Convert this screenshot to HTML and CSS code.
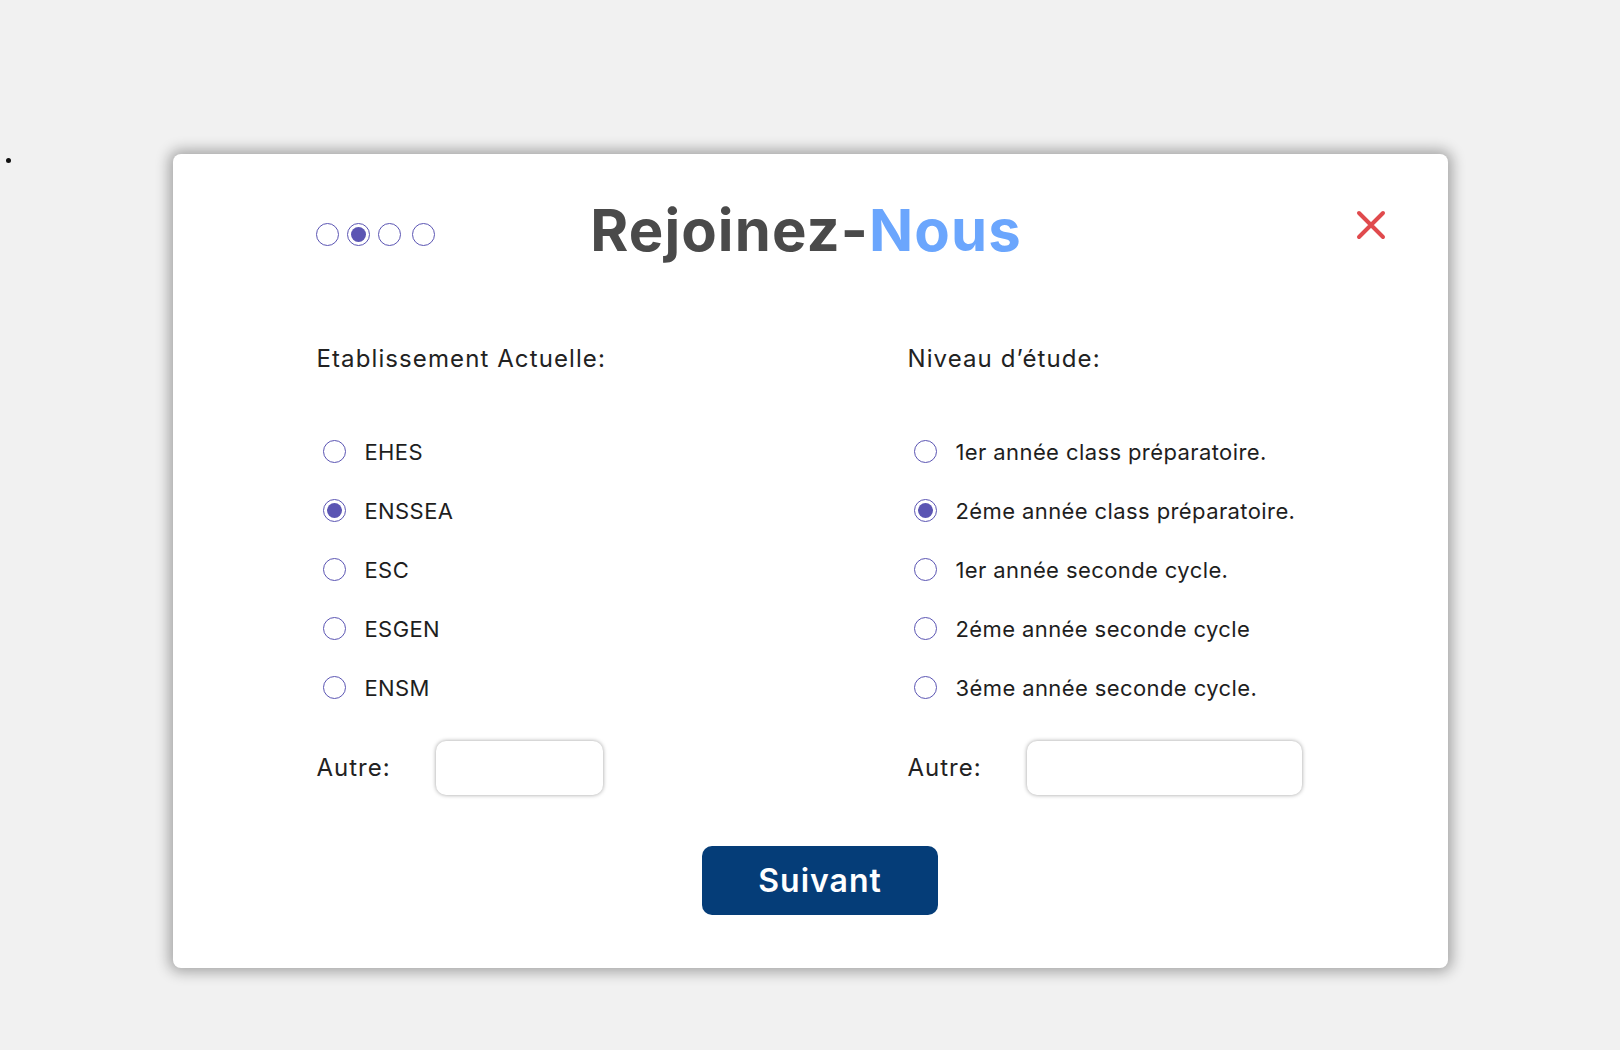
FILE: index.html
```html
<!DOCTYPE html>
<html lang="fr">
<head>
<meta charset="utf-8">
<title>Rejoinez-Nous</title>
<link rel="stylesheet" href="styles.css">
</head>
<body>
<span class="stray"></span>
<div class="modal">
  <button class="close" aria-label="Fermer">
    <svg viewBox="0 0 30 30" width="30" height="30"><path d="M3 3 L27 27 M27 3 L3 27" stroke="#e04a4d" stroke-width="4" stroke-linecap="round"/></svg>
  </button>
  <div class="header">
    <div class="steps">
      <span class="step"></span>
      <span class="step active"></span>
      <span class="step"></span>
      <span class="step last"></span>
    </div>
    <h1 class="title">Rejoinez-<span class="accent">Nous</span></h1>
    <div></div>
  </div>
  <div class="columns">
    <div class="col">
      <div class="label">Etablissement Actuelle:</div>
      <ul class="options">
        <li><span class="radio"></span>EHES</li>
        <li><span class="radio checked"></span>ENSSEA</li>
        <li><span class="radio"></span>ESC</li>
        <li><span class="radio"></span>ESGEN</li>
        <li><span class="radio"></span>ENSM</li>
      </ul>
      <div class="other">
        <span class="other-label">Autre:</span>
        <div class="input small"></div>
      </div>
    </div>
    <div class="col">
      <div class="label">Niveau d’étude:</div>
      <ul class="options">
        <li><span class="radio"></span>1er année class préparatoire.</li>
        <li><span class="radio checked"></span>2éme année class préparatoire.</li>
        <li><span class="radio"></span>1er année seconde cycle.</li>
        <li><span class="radio"></span>2éme année seconde cycle</li>
        <li><span class="radio"></span>3éme année seconde cycle.</li>
      </ul>
      <div class="other">
        <span class="other-label">Autre:</span>
        <div class="input large"></div>
      </div>
    </div>
  </div>
  <div class="actions">
    <button class="next">Suivant</button>
  </div>
</div>
</body>
</html>
```
FILE: styles.css
```css
html, body {
  margin: 0;
  padding: 0;
}
body {
  background: #f1f1f1;
  font-family: Inter, "Liberation Sans", sans-serif;
  padding-top: 154px;
  height: 1050px;
  box-sizing: border-box;
  position: relative;
}
.stray {
  position: absolute;
  left: 6px;
  top: 158px;
  width: 5px;
  height: 5px;
  border-radius: 50%;
  background: #111;
}
.modal {
  position: relative;
  width: 1275px;
  margin: 0 auto;
  background: #fff;
  border-radius: 8px;
  box-shadow: 0 0 14px 4px rgba(0, 0, 0, 0.32);
  padding: 41px 144px 53px;
  box-sizing: border-box;
}
.close {
  position: absolute;
  top: 56px;
  right: 62px;
  width: 30px;
  height: 30px;
  padding: 0;
  border: 0;
  background: none;
}
.close svg { display: block; }
.header {
  display: grid;
  grid-template-columns: 1fr auto 1fr;
  align-items: start;
  height: 70px;
}
.steps {
  display: flex;
  gap: 8px;
  margin-top: 28px;
  margin-left: -1px;
}
.step {
  width: 23px;
  height: 23px;
  border: 1.5px solid #5b55b3;
  border-radius: 50%;
  box-sizing: border-box;
  position: relative;
}
.step.last { margin-left: 3px; }
.step.active::after {
  content: "";
  position: absolute;
  inset: 3px;
  border-radius: 50%;
  background: #5b55b3;
}
.title {
  margin: 0 8px 0 0;
  font-size: 58px;
  line-height: 70px;
  font-weight: 700;
  color: #4a4a4a;
  letter-spacing: 1.1px;
  white-space: nowrap;
}
.accent { color: #6ba6fd; }
.columns {
  display: grid;
  grid-template-columns: 591px 1fr;
  margin-top: 79px;
}
.label {
  font-size: 24px;
  line-height: 30px;
  color: #222;
  letter-spacing: 1.1px;
}
.options {
  list-style: none;
  margin: 48px 0 0;
  padding: 0;
}
.options li {
  display: flex;
  align-items: center;
  height: 59px;
  font-size: 22px;
  color: #1e1e1e;
  letter-spacing: 0.4px;
}
.radio {
  width: 23px;
  height: 23px;
  border: 1.5px solid #5b55b3;
  border-radius: 50%;
  box-sizing: border-box;
  margin-left: 6px;
  margin-right: 19px;
  position: relative;
  flex: none;
}
.radio.checked::after {
  content: "";
  position: absolute;
  inset: 3px;
  border-radius: 50%;
  background: #5b55b3;
}
.other {
  display: grid;
  grid-template-columns: 119px auto;
  align-items: center;
  margin-top: 24px;
}
.other-label {
  font-size: 24px;
  color: #222;
  letter-spacing: 1px;
  position: relative;
  top: -1px;
}
.input {
  height: 54px;
  background: #fff;
  border-radius: 10px;
  box-shadow: 0 0 4px rgba(0, 0, 0, 0.38);
}
.input.small { width: 167px; }
.input.large { width: 275px; }
.actions {
  display: flex;
  justify-content: center;
  padding-left: 20px;
  margin-top: 51px;
}
.next {
  width: 236px;
  height: 69px;
  background: #053d78;
  color: #fff;
  border: 0;
  border-radius: 10px;
  font-family: Inter, "Liberation Sans", sans-serif;
  font-size: 32px;
  font-weight: 600;
  letter-spacing: 1px;
}
```
